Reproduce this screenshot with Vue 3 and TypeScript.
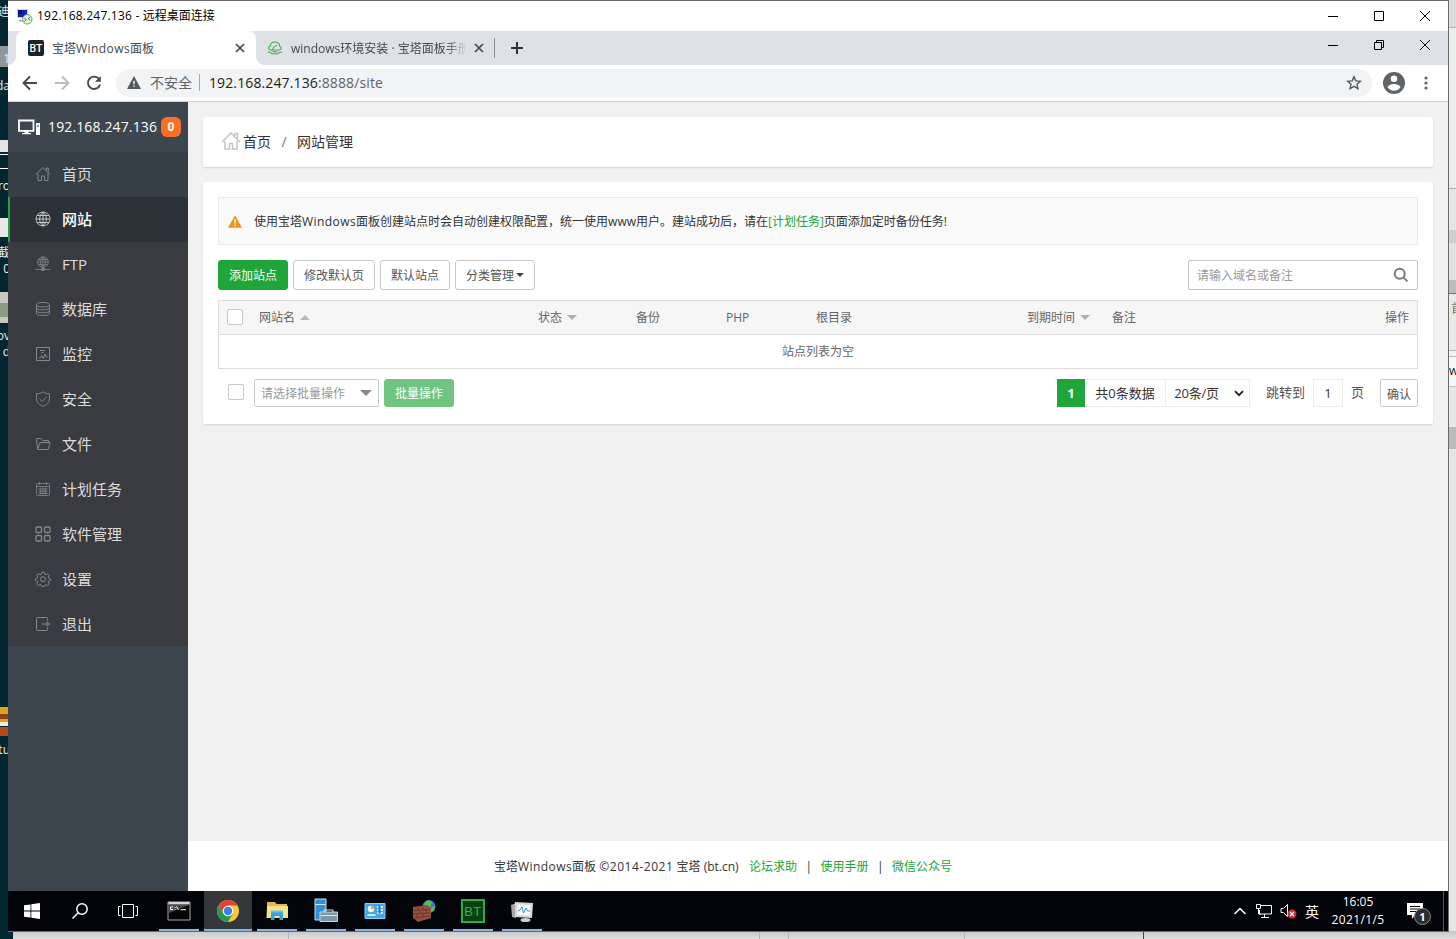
<script setup lang="ts">
interface MenuItem {
  label: string
  icon: string
  active?: boolean
}

interface Column {
  label: string
  sort?: 'up' | 'down'
  right?: boolean
}

interface Fragment {
  text: string
  top: number
}

interface Block {
  top: number
  height: number
  color: string
}

const menu: MenuItem[] = [
  { label: '首页', icon: 'home' },
  { label: '网站', icon: 'globe', active: true },
  { label: 'FTP', icon: 'ftp' },
  { label: '数据库', icon: 'db' },
  { label: '监控', icon: 'monitor' },
  { label: '安全', icon: 'shield' },
  { label: '文件', icon: 'folder' },
  { label: '计划任务', icon: 'calendar' },
  { label: '软件管理', icon: 'grid' },
  { label: '设置', icon: 'gear' },
  { label: '退出', icon: 'exit' },
]

const columns: Column[] = [
  { label: '网站名', sort: 'up' },
  { label: '状态', sort: 'down' },
  { label: '备份' },
  { label: 'PHP' },
  { label: '根目录' },
  { label: '到期时间', sort: 'down' },
  { label: '备注' },
  { label: '操作', right: true },
]

const tasks: string[] = ['cmd', 'chrome', 'explorer', 'server', 'panel', 'firewall', 'bt', 'perf']

const desktopLabels: Fragment[] = [
  { text: '迪', top: 3 },
  { text: '1', top: 50 },
  { text: 'da', top: 77 },
  { text: 'ro', top: 177 },
  { text: '也截', top: 244 },
  { text: '0', top: 260 },
  { text: 'ov', top: 327 },
  { text: 'd', top: 343 },
  { text: 'tu', top: 741 },
]

const desktopIcons: Block[] = [
  { top: 46, height: 21, color: '#8f9895' },
  { top: 140, height: 12, color: '#e4e4e4' },
  { top: 154, height: 1, color: '#ffffff' },
  { top: 168, height: 1, color: '#ffffff' },
  { top: 218, height: 19, color: '#e8e8e8' },
  { top: 292, height: 31, color: '#c8c8c0' },
  { top: 303, height: 14, color: '#8d9a84' },
  { top: 707, height: 15, color: '#e3a21c' },
  { top: 714, height: 5, color: '#8a4510' },
  { top: 722, height: 4, color: '#f3ead8' },
  { top: 727, height: 9, color: '#b5491a' },
]

const backWindows: Block[] = [
  { top: 0, height: 27, color: '#dcdcdc' },
  { top: 27, height: 1, color: '#b4b4b4' },
  { top: 28, height: 160, color: '#ececec' },
  { top: 188, height: 1, color: '#b0b0b0' },
  { top: 189, height: 41, color: '#e6e6e6' },
  { top: 230, height: 13, color: '#cfcfcf' },
  { top: 243, height: 37, color: '#e2e2e2' },
  { top: 280, height: 13, color: '#bdbdbd' },
  { top: 293, height: 1, color: '#777777' },
  { top: 294, height: 56, color: '#e9e9e9' },
  { top: 350, height: 1, color: '#bbbbbb' },
  { top: 351, height: 5, color: '#f2f2f2' },
  { top: 356, height: 1, color: '#bbbbbb' },
  { top: 357, height: 29, color: '#f7f7f7' },
  { top: 386, height: 1, color: '#c4c4c4' },
  { top: 387, height: 40, color: '#e8e8e8' },
  { top: 427, height: 22, color: '#bababa' },
  { top: 449, height: 490, color: '#e6e6e6' },
]
</script>

<template>
  <div class="desktop">
    <div class="strip left">
      <i v-for="b in desktopIcons" :key="b.top" :style="{ top: b.top + 'px', height: b.height + 'px', background: b.color }"></i>
      <span v-for="f in desktopLabels" :key="f.top" :style="{ top: f.top + 'px' }">{{ f.text }}</span>
    </div>
    <div class="strip right">
      <i v-for="b in backWindows" :key="b.top" :style="{ top: b.top + 'px', height: b.height + 'px', background: b.color }"></i>
      <span class="frag-a">首</span>
      <span class="frag-b">w</span>
    </div>
    <div class="strip bottom"><b></b><b></b><b></b><b></b><b></b></div>

    <div class="window">
      <header class="titlebar">
        <svg class="rdp" width="17" height="17" viewBox="0 0 17 17">
          <rect x="1" y="1" width="11" height="9" fill="#c9d2dc" />
          <rect x="2" y="2" width="9" height="7" fill="#1426a8" />
          <path d="M2 2h4v4H2z" fill="#0c1470" />
          <path d="M3 12h6v1.5H3z" fill="#9aa6b4" />
          <circle cx="11.3" cy="11.3" r="4.7" fill="#edf4ea" stroke="#6f9a66" stroke-width="1" />
          <path d="M8.3 10l2 1.6-2 1.7M14.2 9l-2 1.6 2 1.7" fill="none" stroke="#3e7a36" />
        </svg>
        <span class="title"><em class="ip">192.168.247.136 - </em>远程桌面连接</span>
        <div class="controls">
          <svg width="10" height="10" viewBox="0 0 10 10"><path d="M0 5.500h10" /></svg>
          <svg width="10" height="10" viewBox="0 0 10 10"><path d="M.5.5h9v9h-9z" /></svg>
          <svg width="10" height="10" viewBox="0 0 10 10"><path d="M0 0l10 10M10 0L0 10" /></svg>
        </div>
      </header>

      <div class="tabs">
        <div class="tab active">
          <span class="favicon">BT</span>
          <span class="tab-text">宝塔<em class="latin">Windows</em>面板</span>
          <svg class="close" width="10" height="10" viewBox="0 0 10 10"><path d="M1 1l8 8M9 1L1 9" /></svg>
        </div>
        <div class="tab">
          <svg class="cloud" width="16" height="14" viewBox="0 0 16 14">
            <path d="M5 9H3.800C1 9 .9 5.500 3.300 5.200 3 2.500 5.500 1 8 1s5 1.600 4.600 4.200C15 5.800 14.500 9 12 9H5.500C6 6.500 7.500 5 10 4.500M.8 11.300h2.500L5 12.800h6l1.700-1.500h2.500M5.500 10.800h5" />
          </svg>
          <span class="tab-text faded">windows环境安装 · 宝塔面板手册</span>
          <svg class="close" width="10" height="10" viewBox="0 0 10 10"><path d="M1 1l8 8M9 1L1 9" /></svg>
        </div>
        <i class="tab-sep"></i>
        <svg class="plus" width="12" height="12" viewBox="0 0 12 12"><path d="M6 0v12M0 6h12" /></svg>
        <div class="controls inner">
          <svg width="10" height="10" viewBox="0 0 10 10"><path d="M0 5.500h10" /></svg>
          <svg width="10" height="10" viewBox="0 0 10 10"><path d="M.5 2.500h7v7h-7zM2.500 2.500v-2h7v7h-2" /></svg>
          <svg width="10" height="10" viewBox="0 0 10 10"><path d="M0 0l10 10M10 0L0 10" /></svg>
        </div>
      </div>

      <div class="toolbar">
        <svg class="nav" width="16" height="16" viewBox="0 0 16 16"><path d="M15 8H2M8 1.500L1.500 8 8 14.500" /></svg>
        <svg class="nav dim" width="16" height="16" viewBox="0 0 16 16"><path d="M1 8h13M8 1.500L14.500 8 8 14.500" /></svg>
        <svg class="nav" width="16" height="16" viewBox="0 0 16 16">
          <path d="M12.700 3.600A6.200 6.200 0 1 0 14.100 9.500" />
          <path class="head" d="M14.800 1v5.800H9z" />
        </svg>
        <div class="omnibox">
          <svg width="14" height="13" viewBox="0 0 14 13"><path d="M7 0l7 13H0z" fill="#55595d" /><path d="M6.300 4.700h1.400v3.500H6.300zM6.300 9.400h1.400v1.400H6.300z" fill="#fff" /></svg>
          <span class="insecure">不安全</span>
          <i></i>
          <span class="url">192.168.247.136<em>:8888/site</em></span>
          <svg class="star" width="16" height="16" viewBox="0 0 16 16"><path d="M8 1.700l1.900 4.200 4.500.4-3.400 3 1 4.400L8 11.400l-4 2.300 1-4.400-3.400-3 4.500-.4z" /></svg>
        </div>
        <svg class="avatar" width="22" height="22" viewBox="0 0 22 22">
          <circle cx="11" cy="11" r="11" fill="#5f6368" /><circle cx="11" cy="6.700" r="3.300" fill="#fff" />
          <path d="M4.400 15.100c1.300-2 4.200-3 6.600-3s5.300 1 6.600 3c-1.400 2.200-3.900 3.700-6.600 3.700s-5.200-1.500-6.600-3.700z" fill="#fff" />
        </svg>
        <svg class="dots" width="4" height="14" viewBox="0 0 4 14"><circle cx="2" cy="2" r="1.600" /><circle cx="2" cy="7" r="1.600" /><circle cx="2" cy="12" r="1.600" /></svg>
      </div>

      <div class="page">
        <aside class="sidebar">
          <div class="host">
            <svg width="24" height="18" viewBox="0 0 24 18">
              <path d="M2 2.500h14.500v10.300H2z" fill="none" stroke="#fff" stroke-width="1.800" />
              <path d="M7.500 13h4v2.200h-4zM5 15h9v1.200H5z" fill="#fff" />
              <path d="M19 5h4v12h-4z" fill="#fff" /><path d="M20 7h2v2h-2z" fill="#8a9097" />
            </svg>
            <span class="host-ip">192.168.247.136</span>
            <span class="badge">0</span>
          </div>
          <ul>
            <li v-for="m in menu" :key="m.icon" :class="[m.icon, { active: m.active }]">
              <svg width="16" height="16" viewBox="0 0 16 16">
                <path v-if="m.icon === 'home'" d="M1 8.500L8 1.500l7 7M3 7.500v7h3.500V10h3v4.500H13v-7M11.500 4.500v-2.500h1.800v4.500" />
                <path v-else-if="m.icon === 'globe'" d="M8 1a7 7 0 1 0 0 14A7 7 0 1 0 8 1zM8 1v14M1 8h14M2 4.500h12M2 11.500h12M8 1C3.500 5 3.500 11 8 15M8 1c4.500 4 4.500 10 0 14" />
                <path v-else-if="m.icon === 'ftp'" d="M8 .8a5.300 5.300 0 1 0 0 10.600A5.300 5.300 0 1 0 8 .8zM8 .8v12.500M2.700 6h10.600M3.600 3.500h8.800M3.600 8.700h8.800M8 .8c-3.400 3-3.400 7.500 0 10.600M8 .8c3.400 3 3.400 7.500 0 10.600M.5 13.500h15M6.300 12.500h3.400v2H6.300z" />
                <path v-else-if="m.icon === 'db'" d="M1.500 3.700C1.500 2.300 4 1.500 8 1.500s6.500.8 6.500 2.200S12 6 8 6 1.500 5.100 1.500 3.700zv8.600c0 1.400 2.500 2.200 6.500 2.200s6.500-.8 6.500-2.200V3.700M1.500 6.700C1.500 8 4 8.900 8 8.900s6.500-.9 6.500-2.200M1.500 9.600c0 1.300 2.500 2.200 6.500 2.200s6.500-.9 6.500-2.200" />
                <path v-else-if="m.icon === 'monitor'" d="M1.500 1.500h13v13h-13zM3.500 12h1.800l1.500-2.500 1.500 3 2-4.500 1 3h1.200M5 4.500h5M6.500 6.500h2" />
                <path v-else-if="m.icon === 'shield'" d="M8 .9c2 1.400 4 1.800 6.500 1.900v5c0 3.600-2.800 6-6.500 7.500-3.700-1.500-6.500-3.900-6.500-7.500v-5C4 2.700 6 2.300 8 .9zM4.700 8l2.500 2.400 4.300-4.600" />
                <path v-else-if="m.icon === 'folder'" d="M2.500 13.500l-1-11h4.700l1.500 2h5.800v2M2.500 13.500h10.700l2-7H5L3 12.500" />
                <path v-else-if="m.icon === 'calendar'" d="M2.500 2.500h11q1 0 1 1v10q0 1-1 1h-11q-1 0-1-1v-10q0-1 1-1zM1.500 5.500h13M4.500 1v3M11.500 1v3M3.500 8h9M3.500 10.300h9M3.500 12.500h9M5.300 6.500v7M8 6.500v7M10.700 6.500v7" />
                <path v-else-if="m.icon === 'grid'" d="M2 1h3.500q1 0 1 1v3.500q0 1-1 1H2q-1 0-1-1V2q0-1 1-1zM10.500 1H14q1 0 1 1v3.500q0 1-1 1h-3.500q-1 0-1-1V2q0-1 1-1zM2 9.500h3.500q1 0 1 1V14q0 1-1 1H2q-1 0-1-1v-3.500q0-1 1-1zM10.500 9.500H14q1 0 1 1V14q0 1-1 1h-3.500q-1 0-1-1v-3.500q0-1 1-1z" />
                <path v-else-if="m.icon === 'gear'" d="M6.800 1.200h2.400l.5 1.900 1.300.6 1.700-1 1.600 1.700-1 1.700.5 1.200 1.700.5v1.700l-1.700.6-.5 1.200 1 1.700-1.700 1.600-1.700-1-1.200.5-.5 1.700H6.800l-.5-1.700-1.300-.5-1.700 1L1.700 13l1-1.700-.5-1.200-1.700-.6V7.800l1.700-.5.5-1.200-1-1.700 1.600-1.700 1.700 1 1.300-.6zM8 5.700a2.500 2.500 0 1 0 0 5 2.500 2.500 0 1 0 0-5z" />
                <path v-else d="M12.500 4.500V2.500q0-1-1-1h-9q-1 0-1 1v11q0 1 1 1h9q1 0 1-1v-2M6.500 8h7M12 5.800L15 8l-3 2.200z" />
              </svg>
              <span>{{ m.label }}</span>
            </li>
          </ul>
        </aside>

        <div class="main">
          <div class="card crumbs">
            <svg width="20" height="20" viewBox="0 0 20 20"><path d="M1 11l9-9 9 9M4 10v8h4.500v-5.500h3V18H16v-8M14 5V2.500h2.500V8" /></svg>
            <span>首页</span><em>/</em><span>网站管理</span>
          </div>

          <div class="card body">
            <div class="note">
              <svg width="14" height="13" viewBox="0 0 14 13"><path d="M7 .3L14 12.700H0z" fill="#f0941f" /><path d="M6.200 4.200h1.600l-.3 4.200h-1zM6.200 9.400h1.600v1.500H6.200z" fill="#fff" /></svg>
              <p>使用宝塔<em class="latin">Windows</em>面板创建站点时会自动创建权限配置，统一使用www用户。建站成功后，请在<a>[计划任务]</a>页面添加定时备份任务!</p>
            </div>

            <div class="actions">
              <button class="btn primary">添加站点</button>
              <button class="btn wide">修改默认页</button>
              <button class="btn">默认站点</button>
              <button class="btn group">分类管理<i class="caret"></i></button>
              <div class="search">
                <span>请输入域名或备注</span>
                <svg width="16" height="16" viewBox="0 0 16 16"><circle cx="6.700" cy="6.700" r="5" /><path d="M10.400 10.400l4 4" /></svg>
              </div>
            </div>

            <div class="table">
              <div class="thead">
                <i class="box"></i>
                <span v-for="c in columns" :key="c.label" :class="{ end: c.right }">{{ c.label }}<i v-if="c.sort" :class="['tri', c.sort]"></i></span>
              </div>
              <div class="empty">站点列表为空</div>
            </div>

            <div class="foot">
              <i class="box"></i>
              <div class="batch">请选择批量操作<i class="tri down"></i></div>
              <button class="btn primary off">批量操作</button>
              <div class="pager">
                <b>1</b>
                <span class="total">共0条数据</span>
                <span class="size">20条/页<svg width="10" height="7" viewBox="0 0 10 7"><path d="M1 1.200l4 4 4-4" /></svg></span>
                <span class="jump">跳转到</span>
                <span class="num">1</span>
                <span class="unit">页</span>
                <button class="ok">确认</button>
              </div>
            </div>
          </div>

          <footer class="copyright">
            <span>宝塔<em class="latin">Windows</em>面板 <em class="years">©2014-2021</em> 宝塔 (bt.cn)</span>
            <a>论坛求助</a><i>|</i><a>使用手册</a><i>|</i><a>微信公众号</a>
          </footer>
        </div>
      </div>

      <div class="taskbar">
        <div class="sys"><svg width="16" height="16" viewBox="0 0 16 16" fill="#fff"><path d="M0 2.300l6.500-.9v6.200H0zM7.300 1.300L16 0v7.600H7.300zM0 8.400h6.500v6.200L0 13.700zM7.300 8.400H16V16l-8.700-1.300z" /></svg></div>
        <div class="sys"><svg width="18" height="18" viewBox="0 0 18 18" class="line"><circle cx="11" cy="7" r="5.200" /><path d="M7.300 10.700L1.500 16.500" /></svg></div>
        <div class="sys"><svg width="20" height="16" viewBox="0 0 20 16" class="line thin"><path d="M4.500 1.500h11v13h-11zM2.500 3.500h-2v9h2M17.500 3.500h2v9h-2" /></svg></div>
        <div class="tasks">
          <div v-for="t in tasks" :key="t" :class="['task', 'task-' + t]">
            <svg v-if="t === 'cmd'" width="24" height="20" viewBox="0 0 24 20">
              <path d="M1 1h22v18H1z" fill="#050505" stroke="#a8a8a8" /><path d="M1.500 1h21v2.500h-21z" fill="#d5d5d5" /><path d="M2 4h20L2 12z" fill="#4b4b4b" />
              <path d="M6 6H3.500v2.500H6M8 6v.8M8 8v.8M9.500 5.500l2 3.300M13.500 8.700H19" fill="none" stroke="#fff" />
            </svg>
            <svg v-else-if="t === 'chrome'" width="24" height="24" viewBox="0 0 24 24">
              <circle cx="12" cy="12" r="11" fill="#fcc934" />
              <path d="M2.500 6.500A11 11 0 0 1 21.500 6.500H12L7.200 14.700z" fill="#df4336" />
              <path d="M2.500 6.500A11 11 0 0 0 12 23l4.800-8.300H7.200z" fill="#229954" />
              <circle cx="12" cy="12" r="5.300" fill="#fff" /><circle cx="12" cy="12" r="4.200" fill="#3b7ded" />
            </svg>
            <svg v-else-if="t === 'explorer'" width="24" height="22" viewBox="0 0 24 22">
              <path d="M2 2h8l1.500 2H22v14H2z" fill="#e7b64c" /><path d="M2 6h21v12H1.500z" fill="#fbe08a" />
              <path d="M6 12h12v8h-3.500v-4h-5v4H6z" fill="#35a3dc" /><path d="M6 10.500h12v2H6z" fill="#69c2ea" />
            </svg>
            <svg v-else-if="t === 'server'" width="26" height="26" viewBox="0 0 26 26">
              <path d="M2 1h11v21H2z" fill="#2f8fd8" stroke="#bfe0f6" /><path d="M2.500 6.500h10" stroke="#d8eefb" />
              <path d="M7 14h17.500v9.500H7z" fill="#7d96a8" stroke="#c4d3dd" /><path d="M11 14v-2h9v2M8 17.500h16" fill="none" stroke="#dce8ef" />
            </svg>
            <svg v-else-if="t === 'panel'" width="22" height="18" viewBox="0 0 22 18">
              <path d="M1 1.500h20v15H1z" fill="#3fa8e8" stroke="#8bd0f5" /><circle cx="7" cy="7" r="3.300" fill="#eaf6fd" /><path d="M7 7V3.500A3.500 3.500 0 0 1 10.500 7z" fill="#f0a63c" />
              <path d="M13 5h6M13 8h6M13 11h6M3.500 13h8" stroke="#fff" stroke-width="1.500" /><path d="M14.500 3.500h2v8h-2z" fill="#1d6fb5" />
            </svg>
            <svg v-else-if="t === 'firewall'" width="26" height="24" viewBox="0 0 26 24">
              <circle cx="18" cy="7.500" r="6.500" fill="#2f82cf" /><path d="M13 5l4-4 4 2-2 5-5 1zM19 9l5-2-1 5-3 1z" fill="#64b94b" />
              <path d="M2 8l14-2 4 3v10l-13 4-5-4z" fill="#96503f" /><path d="M2 11.500l16-1M2 15l17-1M3 19l16-2M7 8v3M12 7.500v3M9 12v3M15 11v3M6 15v4M12 15v4" stroke="#64301f" stroke-width=".8" fill="none" />
            </svg>
            <span v-else-if="t === 'bt'" class="bt-app">BT</span>
            <svg v-else width="24" height="24" viewBox="0 0 24 24">
              <path d="M1 6l5-2v15l-4-1z" fill="#a8a8a8" /><path d="M5 3l18 1-1 15-17-1z" fill="#d8d8d8" /><path d="M7.500 5.500l13 .6-.7 10.400-12.300-.7z" fill="#f5faff" />
              <path d="M8 12l2-1 2-3 1.500 6 2.500-5 1.500 3h2.500" fill="none" stroke="#3d8fd6" /><ellipse cx="15.500" cy="21" rx="5" ry="2" fill="#d0d0d0" />
            </svg>
          </div>
        </div>
        <div class="tray">
          <svg width="14" height="8" viewBox="0 0 14 8" class="line"><path d="M1.500 7L7 1.500 12.500 7" /></svg>
          <svg class="net" width="18" height="16" viewBox="0 0 18 16"><path d="M5 2.500h11.500v8.500H4.500V7M9.500 11v3M6 14.500h8M1.500 1.500h4v4h-4zM3.500 5.500V11h2" fill="none" stroke="#fff" /></svg>
          <svg class="vol" width="17" height="16" viewBox="0 0 17 16">
            <path d="M1 5.500h2.500l4-4v12l-4-4H1z" fill="none" stroke="#fff" /><circle cx="12" cy="11" r="4.500" fill="#d22c38" /><path d="M10 9l4 4M14 9l-4 4" stroke="#fff" stroke-width="1.300" />
          </svg>
          <span class="ime">英</span>
          <div class="clock"><span class="time">16:05</span><span>2021/1/5</span></div>
          <div class="action">
            <svg width="17" height="16" viewBox="0 0 17 16"><path d="M0 0h16v12H8l-3 4v-4H0z" fill="#fff" /><path d="M3 3.500h10M3 6h10M3 8.500h7" stroke="#05070b" /></svg>
            <b>1</b>
          </div>
          <i class="peek"></i>
        </div>
      </div>
    </div>
  </div>
</template>

<style>
body {
  margin: 0;
}
</style>

<style scoped>
* {
  box-sizing: border-box;
}
.desktop {
  position: relative;
  width: 1456px;
  height: 939px;
  padding-left: 8px;
  overflow: hidden;
  background: #022731;
  font-family: "Open Sans", "Noto Sans CJK SC", sans-serif;
  font-size: 12px;
  color: #333;
}
em,
i {
  font-style: normal;
}
svg {
  display: block;
  flex: none;
}
.latin {
  letter-spacing: 0.43px;
}
.strip {
  position: absolute;
  overflow: hidden;
}
.strip i {
  position: absolute;
  left: 0;
  width: 100%;
}
.strip span {
  position: absolute;
  right: -2px;
  line-height: 18px;
  white-space: nowrap;
}
.strip.left {
  left: 0;
  top: 0;
  width: 8px;
  height: 939px;
  color: #e8eef0;
}
.strip.right {
  left: 1448px;
  top: 0;
  width: 8px;
  height: 939px;
}
.strip.right .frag-a {
  left: 3px;
  top: 300px;
  color: #777;
}
.strip.right .frag-b {
  left: 1px;
  top: 362px;
  color: #222;
}
.strip.bottom {
  left: 13px;
  top: 931px;
  width: 1443px;
  height: 8px;
  display: flex;
  background: linear-gradient(#c6c6c6, #e0e0e0);
}
.strip.bottom b {
  border-right: 1px solid #b5b5b5;
  width: 276px;
}
.strip.bottom b:nth-child(2) { width: 471px; }
.strip.bottom b:nth-child(3) { width: 29px; }
.strip.bottom b:nth-child(4) { width: 176px; }
.strip.bottom b:nth-child(5) { width: 179px; border-color: #444; }

.window {
  position: relative;
  width: 1441px;
  height: 932px;
  border: solid #6b6b6b;
  border-width: 1px 1px 1px 0;
  background: #fff;
}
.titlebar {
  display: flex;
  align-items: center;
  height: 30px;
  padding-left: 8px;
}
.rdp {
  margin-right: 4px;
}
.title {
  color: #000;
  line-height: 18px;
  white-space: pre;
}
.ip {
  letter-spacing: 0.22px;
}
.controls {
  display: flex;
  gap: 36px;
  margin-left: auto;
  padding-right: 18px;
}
.controls path {
  fill: none;
  stroke: #000;
}
.controls.inner {
  margin-top: -6px;
}
.tabs {
  display: flex;
  align-items: center;
  height: 34px;
  padding-left: 8px;
  background: #dee1e6;
}
.tab {
  position: relative;
  display: flex;
  align-items: center;
  width: 239px;
  height: 34px;
  padding: 0 11px;
  color: #45484c;
}
.tab.active {
  width: 240px;
  padding: 0 11px 0 12px;
  border-radius: 8px 8px 0 0;
  background: #fff;
}
.tab.active::before,
.tab.active::after {
  content: "";
  position: absolute;
  bottom: 0;
  width: 8px;
  height: 8px;
}
.tab.active::before {
  left: -8px;
  background: radial-gradient(circle at 0 0, transparent 7.5px, #fff 8px);
}
.tab.active::after {
  right: -8px;
  background: radial-gradient(circle at 100% 0, transparent 7.5px, #fff 8px);
}
.favicon {
  width: 16px;
  height: 16px;
  margin-right: 8px;
  border-radius: 2px;
  background: #222;
  color: #fff;
  font: 500 10.500px/17px Roboto, sans-serif;
  text-align: center;
}
.cloud {
  margin-right: 8px;
}
.cloud path {
  fill: none;
  stroke: #42ab51;
  stroke-width: 1.100;
}
.tab-text {
  flex: 1;
  overflow: hidden;
  padding-top: 2px;
  line-height: 18px;
  white-space: nowrap;
}
.faded {
  flex: none;
  width: 176px;
  margin-right: 7px;
  -webkit-mask-image: linear-gradient(90deg, #000 155px, transparent);
  mask-image: linear-gradient(90deg, #000 155px, transparent);
}
.close path {
  stroke: #45484c;
  stroke-width: 1.700;
}
.tab-sep {
  width: 1px;
  height: 20px;
  margin-right: 16px;
  margin-left: -1px;
  background: #888c91;
}
.plus path {
  stroke: #303235;
  stroke-width: 2;
}
.toolbar {
  display: flex;
  align-items: center;
  height: 37px;
  padding: 0 20px 1px 14px;
  border-bottom: 1px solid #d0d0d2;
}
.nav {
  margin-right: 16px;
}
.nav path {
  fill: none;
  stroke: #45494d;
  stroke-width: 1.900;
}
.nav .head {
  fill: #45494d;
  stroke: none;
}
.nav.dim path {
  stroke: #b9bbbe;
}
.omnibox {
  display: flex;
  align-items: center;
  width: 1256px;
  height: 28px;
  margin-left: -2px;
  padding: 0 10px 0 11px;
  border-radius: 14px;
  background: #f1f3f4;
  font-size: 14px;
  color: #5f6368;
}
.insecure {
  margin-left: 9px;
  padding-bottom: 1px;
}
.omnibox i {
  width: 1px;
  height: 17px;
  margin: 0 9px 0 7px;
  background: #a5a8ab;
}
.url {
  color: #202124;
  letter-spacing: 0.12px;
}
.url em {
  color: #5f6368;
}
.star {
  margin-left: auto;
}
.star path {
  fill: none;
  stroke: #55595d;
  stroke-width: 1.400;
}
.avatar {
  margin-left: 11px;
}
.dots {
  margin-left: auto;
  fill: #5f6368;
}

.page {
  display: flex;
  height: 789px;
}
.sidebar {
  width: 180px;
  background: #3d454e;
}
.host {
  display: flex;
  align-items: center;
  height: 50px;
  padding-left: 9px;
  color: #fff;
  font-size: 14px;
}
.host-ip {
  width: 109px;
  margin-left: 7px;
  padding-bottom: 2px;
  letter-spacing: 0.13px;
}
.badge {
  width: 20px;
  height: 20px;
  margin-left: 4px;
  border-radius: 6px;
  background: #fc6d26;
  font-size: 12px;
  font-weight: 700;
  line-height: 20px;
  text-align: center;
}
ul {
  margin: 0;
  padding: 0;
  list-style: none;
  background: #393b40;
}
li {
  display: flex;
  align-items: center;
  height: 45px;
  padding: 0 0 2px 27px;
  font-size: 15px;
  color: #dcdcdc;
}
li:last-child {
  height: 44px;
  padding-bottom: 1px;
}
li svg {
  margin-right: 11px;
}
li path {
  fill: none;
  stroke: #85888b;
  stroke-width: 1;
}
li.globe path,
li.ftp path,
li.calendar path {
  stroke-width: 0.8;
}
li.grid path {
  stroke-width: 1.300;
}
li.home {
  background: #363e46;
}
li.active {
  padding-left: 25px;
  border-left: 2px solid #20a53a;
  background: #2c3138;
  color: #fff;
  font-weight: 500;
}
li.active path {
  stroke: #dcdfe1;
}

.main {
  display: flex;
  flex-direction: column;
  width: 1260px;
  background: #f1f1f1;
}
.card {
  margin: 15px 15px 0;
  border-radius: 2px;
  background: #fff;
  box-shadow: 0 1px 2px rgba(0, 0, 0, 0.12);
}
.crumbs {
  display: flex;
  align-items: center;
  height: 50px;
  padding: 0 0 2px 18px;
  font-size: 14px;
}
.crumbs svg {
  margin-right: 2px;
}
.crumbs path {
  fill: none;
  stroke: #c4c4c4;
  stroke-width: 1.500;
}
.crumbs em {
  width: 26px;
  text-align: center;
  color: #777;
}
.body {
  height: 242px;
  padding: 15px;
}
.note {
  display: flex;
  align-items: center;
  height: 48px;
  padding-left: 9px;
  border: 1px solid #eaeaea;
  background: #fafafa;
}
.note p {
  margin: 0 0 0 12px;
  white-space: nowrap;
}
a {
  color: #20a53a;
}
.actions {
  display: flex;
  gap: 5px;
  margin-top: 15px;
}
.btn {
  display: flex;
  align-items: center;
  justify-content: center;
  width: 70px;
  height: 30px;
  padding: 0;
  border: 1px solid #c8c8c8;
  border-radius: 3px;
  background: #fff;
  color: #555;
  font: inherit;
}
.btn.wide {
  width: 82px;
}
.btn.group {
  width: 80px;
}
.btn.primary {
  border-color: #20a53a;
  background: #20a53a;
  color: #fff;
}
.btn.off {
  height: 28px;
  margin-left: 5px;
  border-color: #6ec580;
  background: #6ec580;
}
.caret {
  margin-left: 2px;
  border: 4px solid transparent;
  border-top-color: #444;
  border-bottom: 0;
}
.search {
  display: flex;
  align-items: center;
  justify-content: space-between;
  width: 230px;
  height: 30px;
  margin-left: auto;
  padding: 0 8px;
  border: 1px solid #c4c4c4;
  border-radius: 2px;
  color: #999;
}
.search circle,
.search path {
  fill: none;
  stroke: #7a7a7a;
  stroke-width: 2;
}
.table {
  margin-top: 10px;
  border: 1px solid #ddd;
  color: #666;
}
.thead {
  display: grid;
  grid-template-columns: 32px 279px 98px 90px 90px 211px 85px 1fr auto;
  align-items: center;
  height: 34px;
  padding-bottom: 1px;
  border-bottom: 1px solid #ddd;
  background: #f6f6f6;
}
.thead span {
  display: flex;
  align-items: center;
  padding: 0 8px;
}
.box {
  width: 16px;
  height: 16px;
  border: 1px solid #c8c8c8;
  border-radius: 2px;
  background: #fff;
}
.thead .box {
  margin-left: 8px;
}
.tri {
  margin-left: 5px;
  border: 5.500px solid transparent;
}
.tri.up {
  border-bottom-color: #b9b9b9;
  border-top: 0;
}
.tri.down {
  border-top-color: #b0b0b0;
  border-bottom: 0;
}
.empty {
  height: 33px;
  line-height: 33px;
  text-align: center;
}
.foot {
  display: flex;
  align-items: center;
  height: 28px;
  margin-top: 10px;
}
.foot > .box {
  margin: -2px 10px 0;
}
.batch {
  display: flex;
  align-items: center;
  justify-content: space-between;
  width: 125px;
  height: 28px;
  padding: 0 6px;
  border: 1px solid #ccc;
  border-radius: 2px;
  color: #999;
}
.batch .tri {
  border-width: 6px 6px 0;
  border-top-color: #888;
}
.pager {
  display: flex;
  align-items: center;
  height: 28px;
  margin-left: auto;
}
.pager b {
  width: 28px;
  background: #20a53a;
  color: #fff;
  font-size: 13px;
  line-height: 28px;
  text-align: center;
}
.total,
.size,
.num {
  display: flex;
  align-items: center;
  justify-content: center;
  width: 81px;
  height: 28px;
  padding-bottom: 2px;
  border: 1px solid #ececec;
  border-left: 0;
  font-size: 13px;
}
.num {
  padding-bottom: 0;
}
.size {
  width: 84px;
  padding-left: 3px;
  letter-spacing: -0.25px;
}
.size svg {
  margin: 2px 0 0 15px;
}
.size path {
  fill: none;
  stroke: #222;
  stroke-width: 1.800;
}
.jump {
  margin: -4px 8px 0 16px;
  font-size: 13px;
  color: #555;
}
.num {
  width: 30px;
  border-left: 1px solid #ececec;
}
.unit {
  margin: -4px 16px 0 8px;
  font-size: 13px;
  color: #555;
}
.ok {
  width: 38px;
  height: 28px;
  padding: 2px 0 0;
  border: 1px solid #ccc;
  border-radius: 2px;
  background: #fff;
  color: #555;
  font: inherit;
}
.copyright {
  display: flex;
  align-items: center;
  height: 50px;
  margin-top: auto;
  padding-left: 306px;
  background: #fff;
}
.copyright span {
  width: 245px;
  margin-right: 10px;
  white-space: nowrap;
}
.copyright .years {
  letter-spacing: 0.55px;
}
.copyright i {
  width: 23.500px;
  text-align: center;
}

.taskbar {
  display: flex;
  height: 40px;
  background: #020409;
}
.sys {
  display: flex;
  align-items: center;
  justify-content: center;
  width: 48px;
}
.line {
  fill: none;
  stroke: #fff;
  stroke-width: 1.500;
}
.line.thin {
  stroke-width: 1;
}
.tasks {
  display: flex;
  gap: 1px;
  margin-left: 3px;
}
.task {
  position: relative;
  display: flex;
  align-items: center;
  justify-content: center;
  width: 48px;
}
.task::after {
  content: "";
  position: absolute;
  right: 4px;
  bottom: 0;
  left: 4px;
  height: 2px;
  background: #84b6de;
}
.task-chrome {
  background: #35373a;
}
.task-chrome::after {
  right: 0;
  left: 0;
}
.bt-app {
  width: 24px;
  height: 24px;
  border: 2px solid #2fa84f;
  background: #06420f;
  color: #2fae4f;
  font: 13px/21px "Liberation Sans", sans-serif;
  letter-spacing: 0.5px;
  text-align: center;
}
.tray {
  display: flex;
  align-items: center;
  margin-left: auto;
  color: #fff;
}
.net {
  margin-left: 8px;
}
.vol {
  margin-left: 7px;
}
.ime {
  margin-left: 8px;
  font-size: 14px;
}
.clock {
  display: flex;
  flex-direction: column;
  width: 58px;
  margin-left: 10px;
  line-height: 18.500px;
  text-align: center;
  letter-spacing: 0.35px;
}
.clock .time {
  letter-spacing: 0;
}
.action {
  position: relative;
  margin: 0 19px 0 20px;
}
.action b {
  position: absolute;
  top: 5px;
  left: 7px;
  width: 17px;
  height: 17px;
  border: 1px solid #8a8a8a;
  border-radius: 50%;
  background: #2b2c2e;
  font-size: 11px;
  line-height: 15px;
  text-align: center;
}
.peek {
  width: 1px;
  height: 40px;
  margin-right: 4px;
  background: #55585c;
}
</style>
